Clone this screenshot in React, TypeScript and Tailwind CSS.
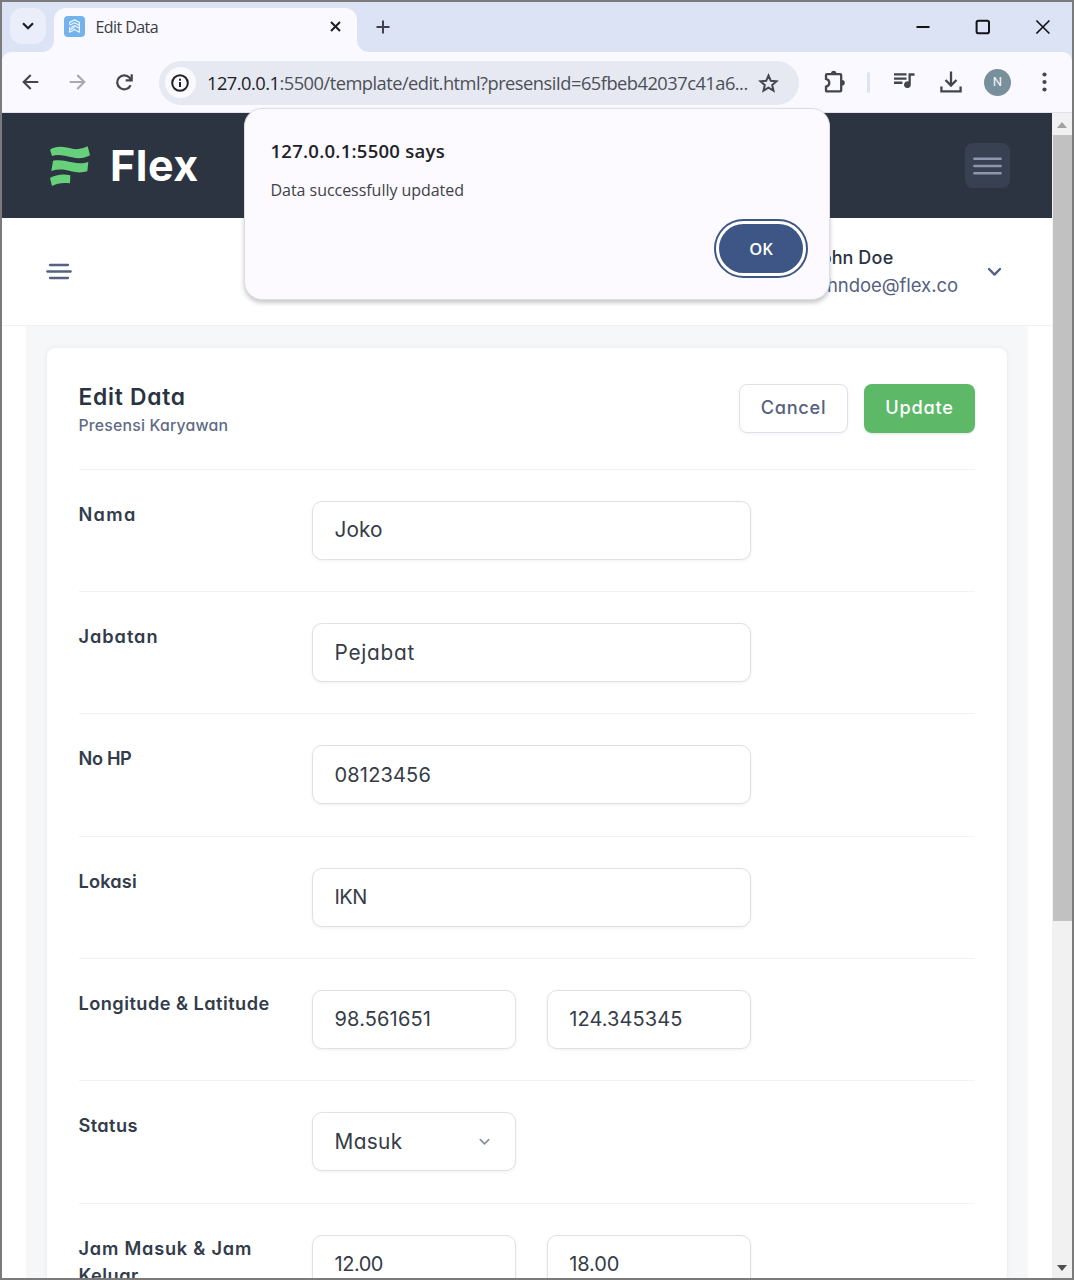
import type { ReactNode } from "react";

function TabStrip() {
  return (
    <div className="flex h-[50px] shrink-0 items-start bg-[#dbe3f5]">
      <div className="ml-[8px] mt-[6px] flex h-[36px] w-[36px] items-center justify-center rounded-[12px] bg-[#eaeefb]">
        <svg width="12" height="8" viewBox="0 0 12 8" fill="none" stroke="#1b1e24" strokeWidth="2.2">
          <path d="M1 1.3 6 6.2 11 1.3" />
        </svg>
      </div>
      <div className="relative ml-[8px] mt-[6px] flex h-[44px] w-[303px] items-center rounded-t-[12px] bg-[#faf9ff] pl-[10px] pr-[16px]">
        <svg className="absolute bottom-0 -left-[12px]" width="12" height="12" viewBox="0 0 12 12">
          <path d="M12 0V12H0A12 12 0 0 0 12 0Z" fill="#faf9ff" />
        </svg>
        <svg className="absolute bottom-0 -right-[12px]" width="12" height="12" viewBox="0 0 12 12">
          <path d="M0 0V12H12A12 12 0 0 1 0 0Z" fill="#faf9ff" />
        </svg>
        <svg className="-mt-[8px]" width="21" height="21" viewBox="0 0 21 21">
          <rect width="21" height="21" rx="4" fill="#73b2ec" />
          <g fill="none" stroke="#eaf5ff" strokeWidth="1.2" strokeLinejoin="round">
            <path d="M5.6 8.4V6.4L10.5 3.9 15.4 6.4V16.2L13.2 15" />
            <path d="M5.6 9.2 10.5 6.8 15.2 9.2" />
            <path d="M7.2 11.2 10.5 9.6 15.2 12" />
            <path d="M5.6 11V16.2L10.5 13.4 13.2 15M5.8 13.6 10.5 11.4" />
          </g>
        </svg>
        <span className="-mt-[6px] ml-[10.5px] grow whitespace-nowrap text-[16px] tracking-[-0.57px] text-[#3a3c42]">Edit Data</span>
        <svg className="-mt-[7px]" width="11" height="11" viewBox="0 0 11 11" stroke="#1b1e24" strokeWidth="2">
          <path d="M1 1 10 10M10 1 1 10" />
        </svg>
      </div>
      <svg className="ml-[19px] mt-[18px]" width="14" height="14" viewBox="0 0 14 14" stroke="#3f424c" strokeWidth="2">
        <path d="M7 .5V13.5M.5 7H13.5" />
      </svg>
      <div className="mr-[22px] ml-auto mt-[17px] flex items-center gap-[45px]">
        <svg width="15" height="16" viewBox="0 0 15 16" stroke="#111418" strokeWidth="2">
          <path d="M1.5 8H14.5" />
        </svg>
        <svg width="15" height="16" viewBox="0 0 15 16" fill="none" stroke="#111418" strokeWidth="2">
          <rect x="1.6" y="1.8" width="12.4" height="12.4" rx="1.8" />
        </svg>
        <svg width="15" height="16" viewBox="0 0 15 16" stroke="#111418" strokeWidth="1.7">
          <path d="M1.4 1.5 14.4 14.5M14.4 1.5 1.4 14.5" />
        </svg>
      </div>
    </div>
  );
}

function Toolbar() {
  return (
    <div className="h-[61px] shrink-0 bg-[#dbe3f5]">
      <div className="flex h-full items-center rounded-t-[9px] border-b border-[#e1e2ea] bg-[#faf9ff]">
        <svg className="ml-[20px]" width="17" height="16" viewBox="0 0 17 16" fill="none" stroke="#43464f" strokeWidth="2.1">
          <path d="M16.3 8H2M8.7 1 1.7 8 8.7 15" />
        </svg>
        <svg className="ml-[30px]" width="17" height="16" viewBox="0 0 17 16" fill="none" stroke="#a9a9b1" strokeWidth="2.1">
          <path d="M.7 8H15M8.3 1 15.3 8 8.3 15" />
        </svg>
        <svg className="ml-[30px]" width="17" height="17" viewBox="0 0 17 17" fill="none" stroke="#43464f" strokeWidth="2.2">
          <path d="M14.6 11.2A7 7 0 1 1 13.6 3.8L15.4 5.8M15.7 .3V6.3H9.7" />
        </svg>
        <div className="mt-[1px] ml-[25.5px] flex h-[44px] w-[640px] shrink-0 items-center rounded-full bg-[#e6e9f2] pl-[6px] pr-[20px]">
          <div className="flex h-[31px] w-[31px] shrink-0 items-center justify-center rounded-full bg-[#faf9ff]">
            <svg width="18" height="18" viewBox="0 0 18 18" fill="none" stroke="#1f2126" strokeWidth="2">
              <circle cx="9" cy="9" r="7.8" />
              <path d="M9 8V13M9 4.8V6.7" />
            </svg>
          </div>
          <span className="ml-[11.5px] w-[541px] shrink-0 whitespace-nowrap text-[18.3px] tracking-[-0.52px] text-[#4d5058]">
            <span className="text-[#1f2024]">127.0.0.1</span>:5500/template/edit.html?presensiId=65fbeb42037c41a6...
          </span>
          <svg className="ml-[9.5px] shrink-0" width="21" height="20" viewBox="0 0 21 20" fill="none" stroke="#43464f" strokeWidth="2">
            <path d="M10.5 2.5 12.8 7.8 18.5 8.3 14.2 12.1 15.5 17.7 10.5 14.7 5.5 17.7 6.8 12.1 2.5 8.3 8.2 7.8Z" />
          </svg>
        </div>
        <svg className="-mt-[1px] ml-[24px]" width="24" height="24" viewBox="0 0 24 24">
          <path d="M3 5.2Q3 4.2 4 4.2H17.2Q18.2 4.2 18.2 5.2V20.4Q18.2 21.4 17.2 21.4H4Q3 21.4 3 20.4V16.7C7.4 15.8 7.4 9.8 3 8.9Z" fill="none" stroke="#43464f" strokeWidth="2.3" />
          <path d="M8 3.5A2.7 2.7 0 0 1 13.4 3.5ZM19 10A2.8 2.8 0 0 1 19 15.6Z" fill="#43464f" />
        </svg>
        <div className="ml-[20.5px] h-[21px] w-[2.5px] rounded bg-[#dbe3f7]" />
        <svg className="-mt-[3px] ml-[24.5px]" width="21" height="17" viewBox="0 0 21 17" fill="#43464f">
          <path d="M0 1.2H12.5V3.5H0ZM0 5.4H12.5V7.7H0ZM0 9.6H8.4V11.9H0ZM14.5 1.2H20.5V3.8H16.8V12.7A3.4 3.4 0 1 1 14.5 9.5Z" />
        </svg>
        <svg className="ml-[25px]" width="22" height="22" viewBox="0 0 22 22" fill="none" stroke="#43464f" strokeWidth="2.3">
          <path d="M11 .5V14.3M5.5 9 11 14.6 16.5 9M1.4 15.5V20.3H20.6V15.5" />
        </svg>
        <div className="ml-[22px] flex h-[27px] w-[27px] items-center justify-center rounded-full bg-[#78909c] font-['Roboto'] text-[13px] text-[#f4f7f8]">N</div>
        <svg className="ml-[31px]" width="5" height="20" viewBox="0 0 5 20" fill="#43464f">
          <circle cx="2.5" cy="2.5" r="2.1" />
          <circle cx="2.5" cy="10" r="2.1" />
          <circle cx="2.5" cy="17.5" r="2.1" />
        </svg>
      </div>
    </div>
  );
}

function AlertDialog() {
  return (
    <div className="absolute left-[241.5px] top-[106px] flex h-[192px] w-[586px] flex-col rounded-[18px] border border-[#dcdde5] bg-[#fcfaff] pl-[26px] pr-[20.5px] pt-[28px] shadow-[0_3px_4px_rgba(60,64,70,0.28)]">
      <p className="text-[18.5px] font-semibold leading-[28px] tracking-[0.26px] text-[#202227]">127.0.0.1:5500 says</p>
      <p className="mt-[13px] text-[16px] leading-[24px] tracking-[-0.04px] text-[#404247]">Data successfully updated</p>
      <button className="mt-[17px] flex h-[59px] w-[94px] items-center justify-center self-end rounded-[30px] border-[2.5px] border-[#3d5685] bg-white p-[3px]">
        <span className="flex h-full w-full items-center justify-center rounded-[26px] bg-[#3d5685] pt-[1px] text-[16.5px] font-semibold text-white">OK</span>
      </button>
    </div>
  );
}

function Scrollbar() {
  return (
    <div className="flex w-[20px] shrink-0 flex-col items-center bg-[#f1f1f1]">
      <svg className="mt-[9px]" width="10" height="6" viewBox="0 0 10 6" fill="#a2a2a2">
        <path d="M0 6 5 0 10 6Z" />
      </svg>
      <div className="mt-[7px] h-[786px] w-[19px] bg-[#c1c1c1]" />
      <svg className="mb-[7px] mt-auto" width="10" height="6" viewBox="0 0 10 6" fill="#505050">
        <path d="M0 0 5 6 10 0Z" />
      </svg>
    </div>
  );
}

function Header() {
  return (
    <header className="flex h-[105px] shrink-0 items-center bg-[#2d3441] pl-[47.5px] pr-[42px]">
      <svg width="40" height="40" viewBox="149 107 120 120" fill="#67d07a">
        <path d="M149 118C172 102 198 112 220 116 237 118 251 113 262 108L269 135C250 146 232 145 215 141 190 135 172 131 155 137Z" />
        <path d="M158 151C180 147 200 152 215 156 235 160 250 160 264 155L261 183C245 188 228 187 212 183 190 176 172 176 153 182Z" />
        <path d="M149 203C165 193 190 190 210 195L209 219C190 216 170 218 155 227Z" />
      </svg>
      <span className="ml-[20.5px] text-[43px] font-bold leading-none tracking-[0.5px] text-white">Flex</span>
      <button className="ml-auto flex h-[45px] w-[45px] items-center justify-center rounded-[8px] bg-[#384151]">
        <svg width="29" height="18" viewBox="0 0 29 18" stroke="#8d96ab" strokeWidth="2.6" strokeLinecap="round">
          <path d="M1.4 1.8H27.6M1.4 9H27.6M1.4 16.2H27.6" />
        </svg>
      </button>
    </header>
  );
}

function UserBar() {
  return (
    <div className="flex h-[108px] shrink-0 items-center border-b border-[#f0f1f3] bg-white pl-[44px] pr-[50px]">
      <svg width="26" height="17" viewBox="0 0 26 17" stroke="#556180" strokeWidth="2.3" strokeLinecap="round">
        <path d="M4 2H22M1.3 8.5H24.7M4 15H22" />
      </svg>
      <div className="-mt-[1px] ml-auto">
        <p className="-ml-[1px] text-[18px] font-medium leading-[28px] text-[#2a3342]">John <span className="tracking-[0.4px]">Doe</span></p>
        <p className="text-[18.5px] leading-[27px] tracking-[-0.05px] text-[#556180]">johndoe@flex.co</p>
      </div>
      <svg className="ml-[29px]" width="15" height="10" viewBox="0 0 15 10" fill="none" stroke="#556180" strokeWidth="2.4" strokeLinecap="round" strokeLinejoin="round">
        <path d="M2 2 7.5 7.6 13 2" />
      </svg>
    </div>
  );
}

function Row({ label, children }: { label: ReactNode; children: ReactNode }) {
  return (
    <div className="flex h-[122.35px] shrink-0 items-start border-t border-[#f1f2f4] pt-[31px]">
      <div className="w-[233.5px] whitespace-nowrap text-[18.2px] font-semibold leading-[27px] text-[#333c4b]">{label}</div>
      <div className="flex gap-[31px]">{children}</div>
    </div>
  );
}

const box = "flex h-[59px] items-center rounded-[10px] border border-[#dfe1e6] bg-white pl-[21.5px] leading-none text-[#353c47] shadow-[0_1px_3px_rgba(50,60,80,0.08)]";

function Field({ wide, children }: { wide?: boolean; children: ReactNode }) {
  return <div className={`${box} ${wide ? "w-[438.5px]" : "w-[203.75px]"}`}>{children}</div>;
}

function FormCard() {
  return (
    <section className="ml-[20.5px] mr-[21.5px] mt-[22px] flex h-[1000px] flex-col rounded-t-[8px] bg-white px-[32px] shadow-[0_0_4px_rgba(50,60,80,0.09)]">
      <div className="flex h-[120.6px] shrink-0 items-start">
        <div className="pt-[33.5px]">
          <h1 className="text-[22.8px] font-semibold leading-[30px] tracking-[0.75px] text-[#2a3342]">Edit Data</h1>
          <p className="mt-[1.5px] text-[15.8px] font-medium leading-[26px] tracking-[0.2px] text-[#616b85]">Presensi Karyawan</p>
        </div>
        <button className="ml-auto mt-[35.5px] flex h-[49.5px] w-[109px] items-center justify-center rounded-[8px] border border-[#dfe1ea] bg-white pb-[1px] pl-[1px] text-[18.2px] font-medium tracking-[0.7px] text-[#556180] shadow-[0_1px_3px_rgba(50,60,80,0.06)]">Cancel</button>
        <button className="ml-[16px] mt-[35.5px] flex h-[49.5px] w-[111px] items-center justify-center rounded-[8px] bg-[#5db868] pb-[1px] pl-[1px] text-[18.2px] font-medium tracking-[0.75px] text-white shadow-[0_1px_2px_rgba(50,90,60,0.15)]">Update</button>
      </div>
      <Row label={<span className="tracking-[1.3px]">Nama</span>}>
        <Field wide><span className="pt-[1.5px] text-[20.8px] tracking-[0.1px]">Joko</span></Field>
      </Row>
      <Row label={<span className="tracking-[0.95px]">Jabatan</span>}>
        <Field wide><span className="pt-[1.5px] text-[20.8px] tracking-[0.75px]">Pejabat</span></Field>
      </Row>
      <Row label={<span className="tracking-[-0.36px]">No HP</span>}>
        <Field wide><span className="text-[20px] tracking-[0.17px]">08123456</span></Field>
      </Row>
      <Row label={<span className="tracking-[0.16px]">Lokasi</span>}>
        <Field wide><span className="text-[20px] tracking-[-0.5px]">IKN</span></Field>
      </Row>
      <Row label={<span className="tracking-[0.46px]">Longitude &amp; Latitude</span>}>
        <Field><span className="text-[20px] tracking-[0.15px]">98.561651</span></Field>
        <Field><span className="text-[20px] tracking-[0.08px]">124.345345</span></Field>
      </Row>
      <Row label={<span className="tracking-[0.4px]">Status</span>}>
        <Field>
          <span className="grow pt-[1.5px] text-[20.8px] tracking-[0.36px]">Masuk</span>
          <svg className="mr-[25px]" width="11" height="8" viewBox="0 0 11 8" fill="none" stroke="#8790a5" strokeWidth="1.7" strokeLinecap="round" strokeLinejoin="round">
            <path d="M1.3 1.6 5.5 5.8 9.7 1.6" />
          </svg>
        </Field>
      </Row>
      <Row label={<><span className="tracking-[0.78px]">Jam Masuk &amp; Jam</span><br /><span className="tracking-[0.5px]">Keluar</span></>}>
        <Field><span className="text-[20px] tracking-[-0.47px]">12.00</span></Field>
        <Field><span className="text-[20px] tracking-[-0.11px]">18.00</span></Field>
      </Row>
    </section>
  );
}

export default function App() {
  return (
    <div className="relative flex h-[1280px] w-[1074px] flex-col overflow-hidden border-2 border-[#7b7b7b] bg-white font-['Open_Sans',sans-serif]">
      <TabStrip />
      <Toolbar />
      <div className="flex min-h-0 grow overflow-hidden">
        <main className="flex w-[1050px] flex-col overflow-hidden font-['Inter',sans-serif] [font-feature-settings:'cv11']">
          <Header />
          <UserBar />
          <div className="mx-[24px] min-h-0 grow overflow-hidden bg-[#f6f7f9]">
            <FormCard />
          </div>
        </main>
        <Scrollbar />
      </div>
      <AlertDialog />
    </div>
  );
}
